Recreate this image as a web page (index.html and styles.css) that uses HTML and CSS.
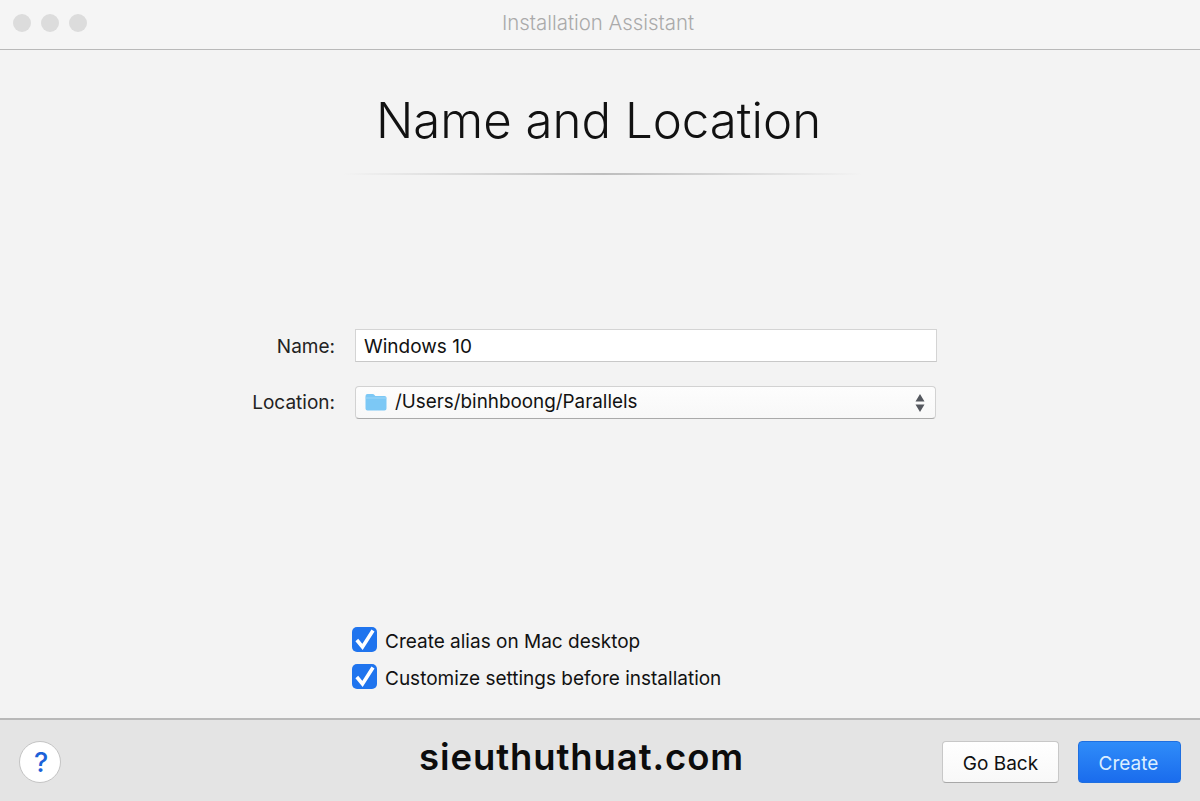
FILE: index.html
```html
<!DOCTYPE html>
<html lang="en">
<head>
<meta charset="utf-8">
<title>Installation Assistant</title>
<link rel="stylesheet" href="styles.css">
</head>
<body>
<div class="window">
  <header class="titlebar">
    <div class="lights"><span class="light"></span><span class="light"></span><span class="light"></span></div>
    <div class="window-title">Installation Assistant</div>
  </header>
  <main class="content">
    <h1 class="heading">Name and Location</h1>
    <div class="rule"></div>
    <div class="form">
      <div class="row">
        <label class="label label-name">Name:</label>
        <div class="input">Windows 10</div>
      </div>
      <div class="row row-loc">
        <label class="label">Location:</label>
        <div class="select">
          <svg class="folder" width="22" height="18" viewBox="0 0 22 18"><path d="M0.5 3 Q0.5 1 2.5 1 H7.5 Q8.8 1 9.5 2 L10.3 3 H19.5 Q21.5 3 21.5 5 V15.5 Q21.5 17.5 19.5 17.5 H2.5 Q0.5 17.5 0.5 15.5 Z" fill="#7cc8f5"/><path d="M0.5 5 H21.5" stroke="#9dd6f8" stroke-width="1"/></svg>
          <span class="select-text">/Users/binhboong/Parallels</span>
          <svg class="updown" width="10" height="20" viewBox="0 0 10 20"><path d="M5 1 L9.5 8.5 H0.5 Z M5 19 L0.5 11.5 H9.5 Z" fill="#55585f"/></svg>
        </div>
      </div>
    </div>
    <div class="checks">
      <div class="check-row">
        <span class="box"><svg width="25" height="25" viewBox="0 0 25 25"><path d="M4.8 13 L10.5 20 L21 3.5" fill="none" stroke="#fff" stroke-width="3.6"/></svg></span>
        <span class="check-text">Create alias on Mac desktop</span>
      </div>
      <div class="check-row">
        <span class="box"><svg width="25" height="25" viewBox="0 0 25 25"><path d="M4.8 13 L10.5 20 L21 3.5" fill="none" stroke="#fff" stroke-width="3.6"/></svg></span>
        <span class="check-text">Customize settings before installation</span>
      </div>
    </div>
  </main>
  <footer class="footer">
    <button class="help">?</button>
    <div class="watermark">sieuthuthuat.com</div>
    <div class="actions">
      <button class="btn btn-back">Go Back</button>
      <button class="btn btn-create">Create</button>
    </div>
  </footer>
</div>
</body>
</html>
```

FILE: styles.css
```css
* { box-sizing: border-box; }
html, body { margin: 0; height: 100%; }
body { font-family: "Inter", "Liberation Sans", sans-serif; color: #111; background: #f3f3f3; overflow: hidden; }
.window { width: 1200px; height: 801px; display: flex; flex-direction: column; }
.titlebar { height: 50px; flex: none; background: #f5f5f5; border-bottom: 1px solid #b9b9b9; position: relative; display: flex; align-items: center; justify-content: center; }
.lights { position: absolute; left: 13px; top: 14px; display: flex; gap: 10px; }
.light { width: 18px; height: 18px; border-radius: 50%; background: #dcdcdc; }
.window-title { font-size: 20.4px; font-weight: 300; color: #aaa; margin-left: -4px; margin-top: -4px; }
.content { flex: 1; display: flex; flex-direction: column; align-items: center; background: #f3f3f3; }
.heading { margin: 39px 0 1px -3px; font-size: 49.2px; line-height: 62px; font-weight: 280; color: #111; }
.rule { width: 520px; height: 2px; margin-top: 21px; margin-left: 6px; background: linear-gradient(90deg, rgba(170,170,170,0), #bdbdbd 50%, rgba(170,170,170,0)); }
.form { width: 100%; margin-top: 154px; display: flex; flex-direction: column; }
.row { display: flex; align-items: center; height: 33px; }
.row-loc { margin-top: 24px; }
.label { width: 335px; text-align: right; font-size: 19px; font-weight: 400; color: #222; }
.label-name { padding-top: 2px; }
.input { margin-left: 20px; width: 582px; height: 33px; background: #fff; border: 1px solid #d4d4d4; border-bottom-color: #c8c8c8; padding-left: 8px; font-size: 19px; line-height: 33px; color: #111; }
.select { margin-left: 20px; width: 581px; height: 33px; background: linear-gradient(#fdfdfd, #f8f8f8); border: 1px solid #d2d2d2; border-bottom-color: #aaa; border-radius: 4px; display: flex; align-items: center; padding: 0 10px 0 9px; font-size: 18.85px; color: #111; }
.folder { flex: none; margin-top: -2px; }
.select-text { margin-left: 8px; flex: 1; margin-top: -2px; }
.updown { flex: none; }
.checks { margin-top: 208px; margin-left: 352px; align-self: flex-start; display: flex; flex-direction: column; gap: 12px; }
.check-row { display: flex; align-items: center; gap: 8px; height: 25px; font-size: 19px; color: #111; }
.check-text { padding-top: 3px; }
.box { width: 25px; height: 25px; flex: none; border-radius: 5px; background: #1f74ee; display: block; }
.box svg { display: block; }
.footer { height: 83px; flex: none; background: #e4e4e4; border-top: 2px solid #b8b8b8; position: relative; display: flex; align-items: center; justify-content: space-between; padding: 3px 19px 0 19px; }
.help { width: 42px; height: 42px; border-radius: 50%; background: #fff; border: 1px solid #c4c4c4; padding: 0 0 0 2px; font: 500 27px "Inter", sans-serif; color: #1c62d8; }
.watermark { position: absolute; left: 419px; top: 14px; font-family: "Inter", sans-serif; font-weight: 600; font-size: 36.5px; letter-spacing: 0.9px; line-height: 46px; color: #0c0c0c; }
.actions { display: flex; gap: 19px; }
.btn { height: 42px; border-radius: 4px; font: 400 19px "Inter", sans-serif; padding: 3px 0 0; }
.btn-back { width: 117px; background: linear-gradient(#fff, #f8f8f8); border: 1px solid #c8c8c8; border-bottom-color: #a8a8a8; color: #111; }
.btn-create { width: 103px; background: linear-gradient(#2f8cf9, #1a6ced); border: 1px solid #1f6fe0; color: #dbeeff; padding-right: 2px; }
```
